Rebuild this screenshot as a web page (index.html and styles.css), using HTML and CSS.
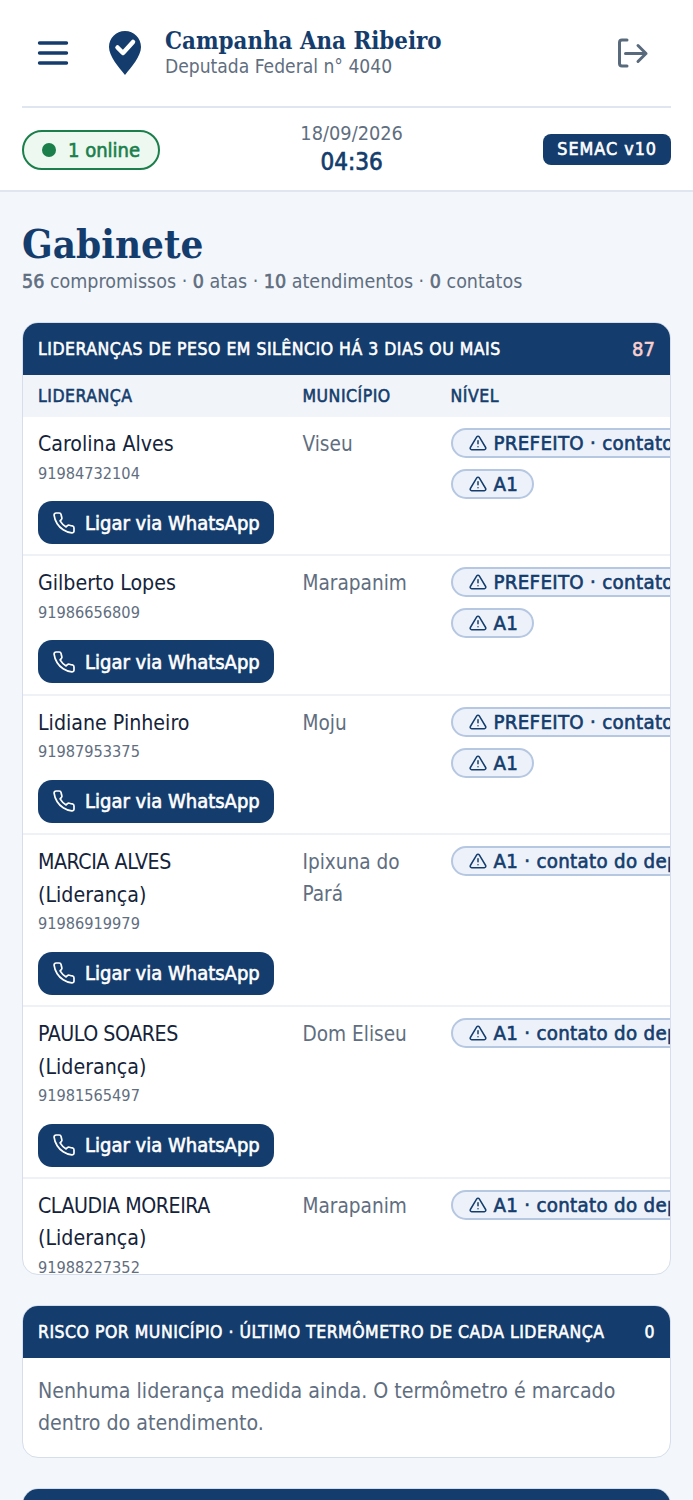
FILE: index.html
```html
<!DOCTYPE html>
<html lang="pt-BR">
<head>
<meta charset="utf-8">
<title>Gabinete</title>
<link rel="stylesheet" href="styles.css">
</head>
<body>
<svg class="defs" width="0" height="0" aria-hidden="true">
  <symbol id="alert" viewBox="0 0 24 24"><path d="M10.3 3.9 1.8 18a2 2 0 0 0 1.7 3h17a2 2 0 0 0 1.7-3L13.7 3.9a2 2 0 0 0-3.4 0z"/><path d="M12 9v4"/><path d="M12 17h.01"/></symbol>
  <symbol id="phone" viewBox="0 0 24 24"><path d="M22 16.9v3a2 2 0 0 1-2.2 2 19.8 19.8 0 0 1-8.6-3.1 19.5 19.5 0 0 1-6-6A19.8 19.8 0 0 1 2.1 4.2 2 2 0 0 1 4.1 2h3a2 2 0 0 1 2 1.7c.1 1 .4 1.900.7 2.800a2 2 0 0 1-.5 2.100L8.100 9.900a16 16 0 0 0 6 6l1.300-1.300a2 2 0 0 1 2.100-.4c.9.300 1.800.6 2.800.7a2 2 0 0 1 1.700 2z"/></symbol>
</svg>
<header class="top">
  <div class="brand-row">
    <button class="icon-btn menu" aria-label="Menu">
      <svg width="32" height="32" viewBox="0 0 32 32"><path d="M2.500 6h27M2.500 16h27M2.500 26h27"/></svg>
    </button>
    <svg class="pin" width="34" height="46" viewBox="0 0 34 46"><path class="pin-shape" d="M17 1C8 1 1 8.200 1 17c0 9 9.500 20 16 28 6.500-8 16-19 16-28C33 8.200 26 1 17 1z"/><path class="pin-check" d="M9.500 17.500 15 23l10-11"/></svg>
    <div class="brand-text">
      <div class="brand-name">Campanha Ana Ribeiro</div>
      <div class="brand-sub">Deputada Federal n° 4040</div>
    </div>
    <button class="icon-btn logout" aria-label="Sair">
      <svg width="34" height="34" viewBox="0 0 34 34"><path d="M12 4H7a2.500 2.500 0 0 0-2.500 2.500v21A2.500 2.500 0 0 0 7 30h5"/><path d="M10.500 17.500H31M23 9.500l8 8-8 8"/></svg>
    </button>
  </div>
  <div class="status-row">
    <div class="online"><span class="dot"></span>1 online</div>
    <div class="clock"><div class="date">18/09/2026</div><div class="time">04:36</div></div>
    <div class="version">SEMAC v10</div>
  </div>
</header>
<main class="main">
  <h1 class="title">Gabinete</h1>
  <p class="stats"><b>56</b> compromissos · <b>0</b> atas · <b>10</b> atendimentos · <b>0</b> contatos</p>

  <section class="card">
    <div class="card-head"><span>LIDERANÇAS DE PESO EM SILÊNCIO HÁ 3 DIAS OU MAIS</span><span class="count-alert">87</span></div>
    <div class="table-wrap">
      <table class="table">
        <thead><tr><th class="c-name">LIDERANÇA</th><th class="c-city">MUNICÍPIO</th><th class="c-level">NÍVEL</th></tr></thead>
        <tbody>
          <tr><td><div class="name">Carolina Alves</div><div class="phone">91984732104</div><a class="call"><svg width="24" height="24"><use href="#phone"/></svg>Ligar via WhatsApp</a></td><td class="city">Viseu</td><td><div class="tag"><svg width="18" height="18"><use href="#alert"/></svg>PREFEITO · contato do deputado</div><div class="tag"><svg width="18" height="18"><use href="#alert"/></svg>A1</div></td></tr>
          <tr><td><div class="name">Gilberto Lopes</div><div class="phone">91986656809</div><a class="call"><svg width="24" height="24"><use href="#phone"/></svg>Ligar via WhatsApp</a></td><td class="city">Marapanim</td><td><div class="tag"><svg width="18" height="18"><use href="#alert"/></svg>PREFEITO · contato do deputado</div><div class="tag"><svg width="18" height="18"><use href="#alert"/></svg>A1</div></td></tr>
          <tr><td><div class="name">Lidiane Pinheiro</div><div class="phone">91987953375</div><a class="call"><svg width="24" height="24"><use href="#phone"/></svg>Ligar via WhatsApp</a></td><td class="city">Moju</td><td><div class="tag"><svg width="18" height="18"><use href="#alert"/></svg>PREFEITO · contato do deputado</div><div class="tag"><svg width="18" height="18"><use href="#alert"/></svg>A1</div></td></tr>
          <tr><td><div class="name"><span class="caps">MARCIA ALVES</span> (Liderança)</div><div class="phone">91986919979</div><a class="call"><svg width="24" height="24"><use href="#phone"/></svg>Ligar via WhatsApp</a></td><td class="city">Ipixuna do Pará</td><td><div class="tag"><svg width="18" height="18"><use href="#alert"/></svg>A1 · contato do deputado</div></td></tr>
          <tr><td><div class="name"><span class="caps">PAULO SOARES</span> (Liderança)</div><div class="phone">91981565497</div><a class="call"><svg width="24" height="24"><use href="#phone"/></svg>Ligar via WhatsApp</a></td><td class="city">Dom Eliseu</td><td><div class="tag"><svg width="18" height="18"><use href="#alert"/></svg>A1 · contato do deputado</div></td></tr>
          <tr><td><div class="name"><span class="caps">CLAUDIA MOREIRA</span> (Liderança)</div><div class="phone">91988227352</div><a class="call"><svg width="24" height="24"><use href="#phone"/></svg>Ligar via WhatsApp</a></td><td class="city">Marapanim</td><td><div class="tag"><svg width="18" height="18"><use href="#alert"/></svg>A1 · contato do deputado</div></td></tr>
        </tbody>
      </table>
    </div>
  </section>

  <section class="card">
    <div class="card-head"><span>RISCO POR MUNICÍPIO · ÚLTIMO TERMÔMETRO DE CADA LIDERANÇA</span><span>0</span></div>
    <p class="empty">Nenhuma liderança medida ainda. O termômetro é marcado dentro do atendimento.</p>
  </section>

  <section class="card">
    <div class="card-head"><span>&nbsp;</span></div>
  </section>
</main>
</body>
</html>
```
FILE: styles.css
```css
* { box-sizing: border-box; }
html, body { margin: 0; padding: 0; }
body {
  width: 693px;
  height: 1500px;
  overflow: hidden;
  background: #f3f6fa;
  color: #14233a;
  font-family: "DejaVu Sans Condensed", "DejaVu Sans", sans-serif;
  font-stretch: condensed;
}
.defs { position: absolute; }

.top { background: #fff; padding: 0 22px; border-bottom: 2px solid #dfe6ef; height: 192px; }
.brand-row { display: flex; align-items: center; height: 108px; border-bottom: 2px solid #dfe6ef; }
.icon-btn { background: none; border: 0; padding: 0; display: flex; }
.menu { margin-left: 15px; }
.menu svg path { fill: none; stroke: #143d6d; stroke-width: 3.4; stroke-linecap: round; }
.pin { margin-left: 39px; }
.pin-shape { fill: #143d6d; }
.pin-check { fill: none; stroke: #fff; stroke-width: 4.500; stroke-linecap: round; stroke-linejoin: round; }
.brand-text { margin-left: 23px; flex: 1; }
.brand-name { font-family: "DejaVu Serif Condensed", "DejaVu Serif", serif; font-weight: 700; font-size: 23.800px; line-height: 28px; color: #143d6d; }
.brand-sub { font-size: 19.100px; line-height: 24px; color: #5f6e80; }
.logout { margin-right: 22px; }
.logout svg path { fill: none; stroke: #5a6a7d; stroke-width: 3; stroke-linecap: round; stroke-linejoin: round; }

.status-row { display: flex; justify-content: space-between; align-items: center; height: 82px; }
.online { display: flex; align-items: center; gap: 12px; height: 40px; margin-top: 1px; padding: 0 18px; border: 2px solid #1a7f4b; border-radius: 21px; background: #edf8f1; color: #1a7f4b; font-size: 20px; -webkit-text-stroke: .6px currentColor; }
.dot { width: 14px; height: 14px; border-radius: 50%; background: #1a7f4b; }
.clock { text-align: center; }
.date { font-size: 19.800px; line-height: 26px; color: #5f6e80; }
.time { font-size: 24px; line-height: 30px; color: #143d6d; -webkit-text-stroke: .7px currentColor; }
.version { background: #143d6d; color: #fff; font-size: 17.800px; letter-spacing: 1px; height: 31px; margin-top: 1px; line-height: 29px; padding: 0 14px; border-radius: 8px; -webkit-text-stroke: .6px currentColor; }

.main { padding: 29px 22px 0; }
.title { margin: 0; font-family: "DejaVu Serif Condensed", "DejaVu Serif", serif; font-weight: 700; font-size: 40px; line-height: 46px; color: #143d6d; }
.stats { margin: 2px 0 28px; font-size: 19.500px; line-height: 25px; color: #5f6e80; }
.stats b { font-weight: 400; -webkit-text-stroke: .6px currentColor; }

.card { background: #fff; border: 1px solid #d5deea; border-radius: 16px; overflow: hidden; margin-bottom: 30px; }
.card-head { display: flex; justify-content: space-between; align-items: center; height: 52px; padding: 0 15px; background: #143d6d; color: #fff; font-size: 17.500px; letter-spacing: .5px; -webkit-text-stroke: .55px currentColor; }
.count-alert { color: #f9cfcf; font-size: 20px; letter-spacing: 0; }

.table-wrap { height: 899px; overflow: hidden; }
.table { border-collapse: collapse; width: 760px; table-layout: fixed; }
.table th { background: #f1f4f9; color: #143d6d; font-size: 17.500px; font-weight: 400; letter-spacing: .5px; -webkit-text-stroke: .55px currentColor; text-align: left; height: 42px; padding: 0 15px; }
.c-name { width: 264.500px; }
.c-city { width: 148px; }
.table td { vertical-align: top; padding: 11px 15px 10.400px; border-bottom: 2px solid #eef2f7; }
.name { font-size: 21.200px; line-height: 32.500px; color: #14233a; width: 205px; }
.caps { letter-spacing: -.45px; }
.phone { font-size: 16.200px; line-height: 26px; color: #5f6e80; }
.call { display: inline-flex; align-items: center; gap: 9px; height: 43px; margin-top: 14.500px; padding: 0 14px; border-radius: 14px; background: #143d6d; color: #fff; font-size: 20px; -webkit-text-stroke: .6px currentColor; white-space: nowrap; }
.call svg { fill: none; stroke: #fff; stroke-width: 1.700; stroke-linecap: round; stroke-linejoin: round; -webkit-text-stroke: 0; }
.city { font-size: 20.600px; line-height: 32px; color: #5f6e80; }
.tag { display: inline-flex; align-items: center; gap: 7px; height: 30px; margin: 0 0 11px; padding: 0 14px 0 16px; border: 2px solid #b6c7e2; border-radius: 15px; background: #edf2fa; color: #143d6d; font-size: 20.300px; letter-spacing: .3px; -webkit-text-stroke: .6px currentColor; white-space: nowrap; }
.tag svg { fill: none; stroke: #143d6d; stroke-width: 2; stroke-linecap: round; stroke-linejoin: round; }
.empty { margin: 0; padding: 17px 15px 18px; font-size: 21.200px; line-height: 32px; color: #5f6e80; }
```
